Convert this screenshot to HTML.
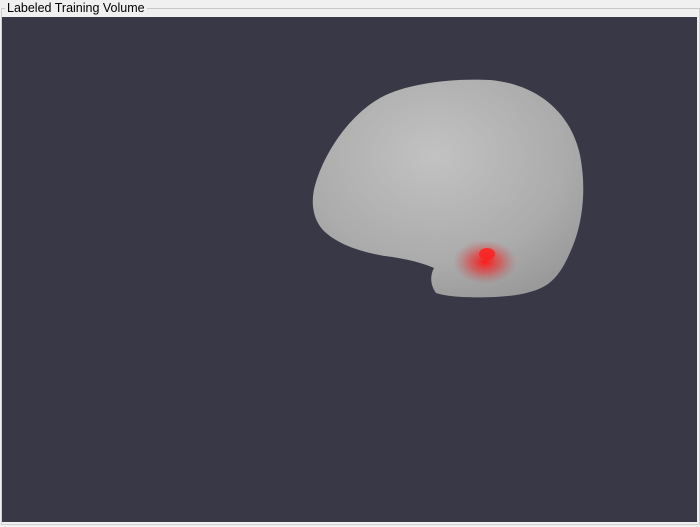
<!DOCTYPE html>
<html><head><style>
body{margin:0;width:700px;height:525px;background:#f0f0f0;position:relative;overflow:hidden;font-family:"Liberation Sans",sans-serif}
.fr{position:absolute;left:1px;top:8px;width:697px;height:515px;border:1px solid #d0d0d0;border-top-color:#c8c8c8}
.lb{position:absolute;left:5px;top:1px;font-size:12.5px;color:#000;background:#f0f0f0;padding:0 2px;line-height:14px}
.v{position:absolute;left:2px;top:17px;width:695px;height:505px;background:#393846}
</style></head><body>
<div class="fr"></div>
<div class="lb">Labeled Training Volume</div>
<div class="v">
<svg width="695" height="505" viewBox="2 17 695 505">
<defs>
<radialGradient id="g" cx="0.45" cy="0.35" r="0.7">
<stop offset="0" stop-color="#c2c2c2"/><stop offset="0.7" stop-color="#ababab"/><stop offset="1" stop-color="#9a9a9a"/>
</radialGradient>
<radialGradient id="r" cx="0.5" cy="0.5" r="0.5">
<stop offset="0" stop-color="#ff1a1a"/><stop offset="0.5" stop-color="#e03a3a" stop-opacity="0.6"/><stop offset="1" stop-color="#c06060" stop-opacity="0"/>
</radialGradient>
</defs>
<path d="M380,98 C405,84 450,78 490,80 C535,84 570,110 580,155 C587,190 582,225 572,248 C566,262 560,275 548,284 C535,293 515,296 495,297 C470,298 448,297 436,293 C430,285 430,275 434,268 C418,261 400,258 385,256 C360,252 338,244 325,232 C312,220 310,200 316,182 C326,150 350,115 380,98 Z" fill="url(#g)"/>
<ellipse cx="485" cy="262" rx="32" ry="22" fill="url(#r)"/>
<ellipse cx="487" cy="254" rx="8" ry="6" fill="#ff2020" opacity="0.85"/>
</svg>
</div>
</body></html>
